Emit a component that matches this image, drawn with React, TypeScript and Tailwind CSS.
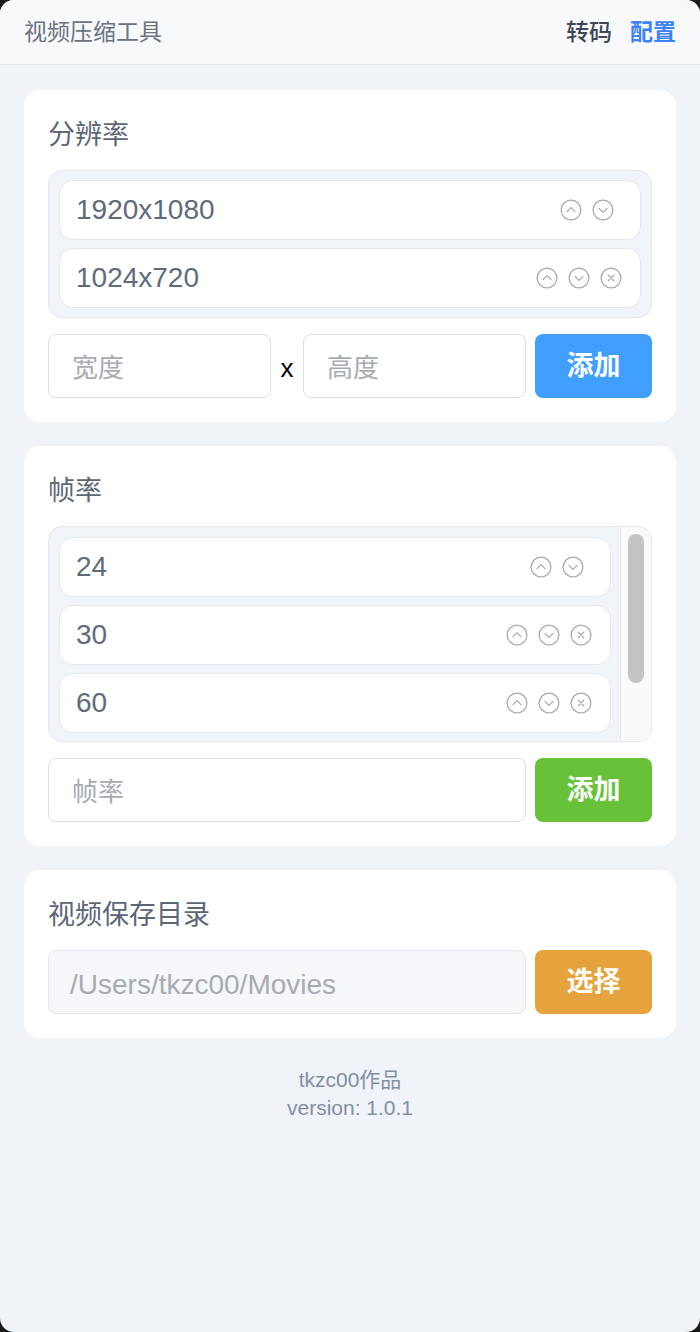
import React from 'react';

const font = { fontFamily: '"Liberation Sans", "Noto Sans CJK SC", sans-serif' };

type IconKind = 'up' | 'down' | 'close';

const CircleIcon: React.FC<{ kind: IconKind }> = ({ kind }) => (
  <svg width="22" height="22" viewBox="0 0 24 24" fill="none" stroke="#a8abb2" strokeWidth="1.4" strokeLinecap="round" strokeLinejoin="round">
    <circle cx="12" cy="12" r="10.8" />
    {kind === 'up' && <path d="M7.6 13.8 12 9.4l4.4 4.4" />}
    {kind === 'down' && <path d="M7.6 10.2 12 14.6l4.4-4.4" />}
    {kind === 'close' && <path d="M9 9l6 6M15 9l-6 6" />}
  </svg>
);

interface ItemProps {
  value: string;
  removable?: boolean;
}

const ListItem: React.FC<ItemProps> = ({ value, removable }) => (
  <div
    className={`flex items-center h-[60px] shrink-0 bg-white border border-[#e4e7ed] rounded-[14px] pl-[16px] ${removable ? 'pr-[18px]' : 'pr-[26px]'}`}
  >
    <span className="flex-1 text-[28px] text-[#606b7a]">{value}</span>
    <div className="flex items-center gap-[10px]">
      <CircleIcon kind="up" />
      <CircleIcon kind="down" />
      {removable && <CircleIcon kind="close" />}
    </div>
  </div>
);

const Card: React.FC<{ title: string; children: React.ReactNode }> = ({ title, children }) => (
  <div className="bg-white rounded-[16px] p-6 flex flex-col gap-4">
    <div className="h-[40px] leading-[42px] text-[27px] text-[#5c6675]">{title}</div>
    {children}
  </div>
);

// inputs: a few px of top padding to sit the text where the screenshot has it
const inputClass =
  'h-[64px] min-w-0 border rounded-[8px] pt-[5px] text-[26px] placeholder-[#a8abb2] outline-none';

const Button: React.FC<{ color: string; label: string }> = ({ color, label }) => (
  <button className={`h-[64px] w-[117px] shrink-0 rounded-[8px] text-white text-[27px] font-bold ${color}`}>{label}</button>
);

export default function App() {
  return (
    <div className="bg-[#1a1a1a] w-[700px] h-[1332px]" style={font}>
      <div className="h-full rounded-[14px] overflow-hidden bg-[#f0f3f7] flex flex-col">
        <header className="h-[65px] shrink-0 bg-[#f8f9fb] border-b border-[#e1e4e8] flex items-center px-6">
          <span className="flex-1 text-[23px] text-[#6b7280]">视频压缩工具</span>
          <span className="text-[23px] text-[#3f4756] font-medium">转码</span>
          <span className="ml-[18px] text-[23px] text-[#3b82f6] font-bold">配置</span>
        </header>

        <main className="flex flex-col gap-6 px-6 pt-[25px]">
          <Card title="分辨率">
            <div className="bg-[#f1f4f8] border border-[#e4e7ed] rounded-[14px] px-[10px] py-[9px] flex flex-col gap-2">
              <ListItem value="1920x1080" />
              <ListItem value="1024x720" removable />
            </div>
            <div className="flex items-center">
              <input className={`${inputClass} flex-1 bg-white border-[#dcdfe6] px-[23px]`} placeholder="宽度" />
              <span className="w-[32px] text-center text-[26px] leading-[40px] pt-[4px] text-black">x</span>
              <input className={`${inputClass} flex-1 bg-white border-[#dcdfe6] px-[23px]`} placeholder="高度" />
              <div className="ml-[9px]">
                <Button color="bg-[#409eff]" label="添加" />
              </div>
            </div>
          </Card>

          <Card title="帧率">
            <div className="h-[216px] bg-[#f1f4f8] border border-[#e4e7ed] rounded-[14px] overflow-hidden flex">
              <div className="flex-1 min-w-0 flex flex-col gap-2 pl-[10px] pt-[10px] pr-[9px] overflow-hidden">
                <ListItem value="24" />
                <ListItem value="30" removable />
                <ListItem value="60" removable />
              </div>
              <div className="w-[31px] shrink-0 bg-[#fafafa] border-l border-[#e6e6e6] pt-[7px] flex justify-center">
                <div className="w-[16px] h-[149px] rounded-full bg-[#c4c4c4]" />
              </div>
            </div>
            <div className="flex items-center gap-[9px]">
              <input className={`${inputClass} flex-1 bg-white border-[#dcdfe6] px-[23px]`} placeholder="帧率" />
              <Button color="bg-[#67c23a]" label="添加" />
            </div>
          </Card>

          <Card title="视频保存目录">
            <div className="flex items-center gap-[9px]">
              <input
                className={`${inputClass} flex-1 bg-[#f5f7fa] border-[#e4e7ed] px-[21px] text-[28px] text-[#a8abb2]`}
                value="/Users/tkzc00/Movies"
                disabled
                readOnly
              />
              <Button color="bg-[#e6a23c]" label="选择" />
            </div>
          </Card>

          <footer className="pt-[4px] text-center text-[21px] leading-[28px] text-[#8390a3]">
            <div>tkzc00作品</div>
            <div>version: 1.0.1</div>
          </footer>
        </main>
      </div>
    </div>
  );
}
